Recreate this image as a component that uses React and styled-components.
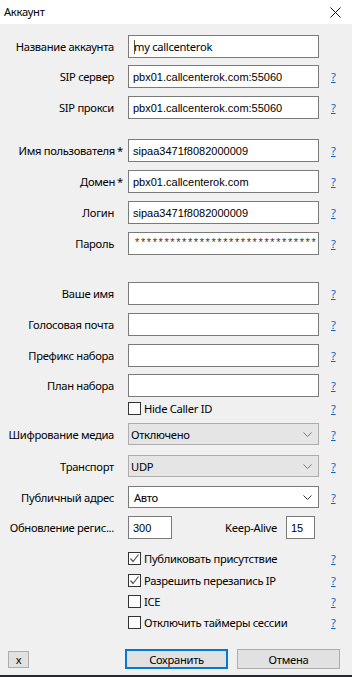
import styled, { createGlobalStyle } from "styled-components";

const GlobalStyle = createGlobalStyle`
  html, body { margin: 0; padding: 0; background: #f0f0f0; }
  body {
    font-family: "Noto Sans", "Liberation Sans", sans-serif;
    font-size: 11.2px;
    letter-spacing: -0.3px;
    color: #000;
  }
`;

const Window = styled.div`
  width: 352px;
  height: 677px;
  box-sizing: border-box;
  display: flex;
  flex-direction: column;
  background: #f0f0f0;
  border-bottom: 2px solid #1f2830;
`;

const TitleBar = styled.div`
  height: 24px;
  flex-shrink: 0;
  background: #fff;
  display: flex;
  align-items: center;
  justify-content: space-between;
  padding: 0 11px 0 4px;
`;

const Title = styled.span`
  line-height: 1;
`;

const Row = styled.div`
  display: grid;
  grid-template-columns: 128px 191px 1fr;
  align-items: center;
  height: ${p => p.$h || 23}px;
  margin-top: ${p => p.$top || 0}px;
`;

const RefreshRow = styled.div`
  display: grid;
  grid-template-columns: 128px 44px 114px 29px;
  align-items: center;
  height: 23px;
  margin-top: ${p => p.$top || 0}px;
`;

const Label = styled.div`
  text-align: right;
  padding-right: ${p => (p.$req ? 6 : 14)}px;
  white-space: nowrap;
`;

const Req = styled.span`
  display: inline-block;
  width: 5px;
  margin-left: 2px;
  text-align: left;
`;

const TextBox = styled.div`
  height: 100%;
  box-sizing: border-box;
  border: 1px solid #7a7a7a;
  background: #fff;
  display: flex;
  align-items: center;
  padding-left: ${p => p.$pl ?? 4}px;
  font-family: ${p => (p.$ui ? `"Noto Sans", sans-serif` : `"Liberation Sans", Arial, sans-serif`)};
  font-size: ${p => (p.$ui ? 11.2 : 11)}px;
  letter-spacing: ${p => (p.$ui ? -0.3 : 0)}px;
  white-space: nowrap;
  overflow: hidden;
`;

const Caret = styled.span`
  width: 1px;
  height: 14px;
  background: #6b5020;
  margin-right: -1px;
`;

const Stars = styled.span`
  font-family: "Liberation Sans", Arial, sans-serif;
  font-size: 11px;
  letter-spacing: 1.6px;
  color: #4a3418;
  align-self: flex-start;
  margin-top: 3px;
`;

const Select = styled.div`
  height: 100%;
  box-sizing: border-box;
  border: 1px solid ${p => (p.$plain ? "#7a7a7a" : "#adadad")};
  background: ${p => (p.$plain ? "#fff" : "#e5e5e5")};
  display: flex;
  align-items: center;
  justify-content: space-between;
  padding: 0 6px 0 ${p => (p.$plain ? 5 : 2)}px;
`;

const Help = styled.a`
  padding-left: 12px;
  color: #0066cc;
  text-decoration: underline;
`;

const Check = styled.label`
  display: flex;
  align-items: center;
  gap: 3px;
  white-space: nowrap;
`;

const Box = styled.span`
  width: 13px;
  height: 13px;
  box-sizing: border-box;
  border: 1px solid #333;
  background: #fff;
  display: flex;
  align-items: center;
  justify-content: center;
`;

const KeepLabel = styled.div`
  text-align: right;
  padding-right: 9px;
`;

const Footer = styled.div`
  display: flex;
  align-items: center;
  margin-top: ${p => p.$top || 0}px;
  padding-left: 8px;
`;

const Button = styled.div`
  box-sizing: border-box;
  width: ${p => p.$w}px;
  height: ${p => p.$h || 20}px;
  margin-left: ${p => p.$ml || 0}px;
  background: #e1e1e1;
  border: ${p => (p.$primary ? "2px solid #0078d7" : "1px solid #adadad")};
  display: flex;
  align-items: center;
  justify-content: center;
`;

const Chevron = ({ dark }) => (
  <svg width="9" height="5" viewBox="0 0 9 5">
    <polyline points="0.5,0.5 4.5,4.5 8.5,0.5" fill="none" stroke={dark ? "#333" : "#777"} strokeWidth="1" />
  </svg>
);

const Tick = () => (
  <svg width="11" height="11" viewBox="0 0 11 11">
    <polyline points="1.5,5.5 4,8.5 9.5,1.5" fill="none" stroke="#555" strokeWidth="1.2" />
  </svg>
);

const CheckRow = ({ top, text, checked }) => (
  <Row $top={top} $h={20}>
    <div />
    <Check>
      <Box>{checked && <Tick />}</Box>
      {text}
    </Check>
    <Help>?</Help>
  </Row>
);

const Field = ({ top, label, req, value, help = true }) => (
  <Row $top={top}>
    <Label $req={req}>
      {label}
      {req && <Req>*</Req>}
    </Label>
    <TextBox>{value}</TextBox>
    {help ? <Help>?</Help> : <div />}
  </Row>
);

const Combo = ({ top, label, value, plain }) => (
  <Row $top={top} $h={22}>
    <Label>{label}</Label>
    <Select $plain={plain}>
      {value}
      <Chevron dark={plain} />
    </Select>
    <Help>?</Help>
  </Row>
);

export default function App() {
  return (
    <>
      <GlobalStyle />
      <Window>
        <TitleBar>
          <Title>Аккаунт</Title>
          <svg width="11" height="11" viewBox="0 0 11 11">
            <path d="M0.5 0.5 L10.5 10.5 M10.5 0.5 L0.5 10.5" stroke="#111" strokeWidth="1" />
          </svg>
        </TitleBar>

        <Row $top={11}>
          <Label>Название аккаунта</Label>
          <TextBox $ui $pl={5}>
            <Caret />
            my callcenterok
          </TextBox>
          <div />
        </Row>
        <Field top={7} label="SIP сервер" value="pbx01.callcenterok.com:55060" />
        <Field top={8} label="SIP прокси" value="pbx01.callcenterok.com:55060" />

        <Field top={20} label="Имя пользователя" req value="sipaa3471f8082000009" />
        <Field top={8} label="Домен" req value="pbx01.callcenterok.com" />
        <Field top={8} label="Логин" value="sipaa3471f8082000009" />
        <Row $top={8}>
          <Label>Пароль</Label>
          <TextBox $pl={6}>
            <Stars>{"*".repeat(31)}</Stars>
          </TextBox>
          <Help>?</Help>
        </Row>

        <Field top={27} label="Ваше имя" value="" />
        <Field top={8} label="Голосовая почта" value="" />
        <Field top={8} label="Префикс набора" value="" />
        <Field top={7} label="План набора" value="" />
        <CheckRow top={1} text="Hide Caller ID" />

        <Combo top={5} label="Шифрование медиа" value="Отключено" />
        <Combo top={10} label="Транспорт" value="UDP" />
        <Combo top={9} label="Публичный адрес" value="Авто" plain />

        <RefreshRow $top={8}>
          <Label>Обновление регис...</Label>
          <TextBox>300</TextBox>
          <KeepLabel>Keep-Alive</KeepLabel>
          <TextBox>15</TextBox>
        </RefreshRow>

        <CheckRow top={9} text="Публиковать присутствие" checked />
        <CheckRow top={2} text="Разрешить перезапись IP" checked />
        <CheckRow top={1} text="ICE" />
        <CheckRow top={1} text="Отключить таймеры сессии" />

        <Footer $top={17}>
          <Button $w={21} $h={17}>x</Button>
          <Button $w={103} $ml={96} $primary>Сохранить</Button>
          <Button $w={103} $ml={9}>Отмена</Button>
        </Footer>
      </Window>
    </>
  );
}
